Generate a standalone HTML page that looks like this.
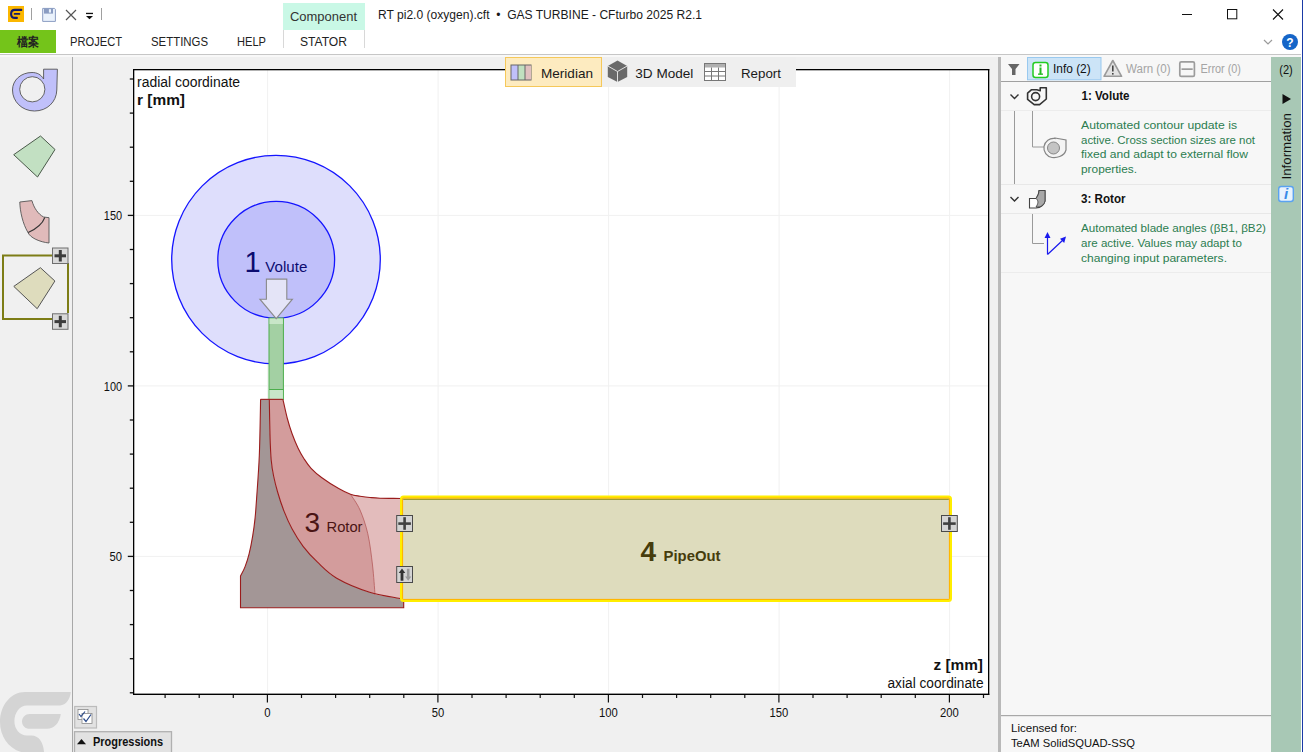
<!DOCTYPE html>
<html><head><meta charset="utf-8">
<style>
html,body{margin:0;padding:0;width:1303px;height:752px;overflow:hidden;background:#f0f0f0;}
svg{position:absolute;left:0;top:0;display:block;}
text{font-family:"Liberation Sans",sans-serif;}
</style></head>
<body>
<svg width="1303" height="752" viewBox="0 0 1303 752">
<!-- ===== title + menu area ===== -->
<rect x="0" y="0" width="1303" height="54" fill="#ffffff"/>
<rect x="0" y="54" width="1303" height="1" fill="#c6c6c6"/><rect x="0" y="55" width="1303" height="2" fill="#f8f8f8"/>
<!-- logo -->
<rect x="8" y="6" width="16" height="16" fill="#fbb700"/>
<path d="M21.3 9.9 L14.8 9.9 C12.3 9.9 11.1 11.8 11.1 14 C11.1 16.3 12.5 17.9 15 17.9 L16.9 17.9" fill="none" stroke="#14196a" stroke-width="2.1" stroke-linecap="round"/>
<path d="M14.6 13.9 L19.4 13.9" fill="none" stroke="#14196a" stroke-width="1.7" stroke-linecap="round"/>
<rect x="31" y="8" width="1" height="12" fill="#a0a0a0"/>
<!-- save icon -->
<path d="M42.7 8.4 L54.5 8.4 L55.4 9.3 L55.4 21.4 L42.7 21.4 Z" fill="#eaf2fc" stroke="#8a9cc2" stroke-width="1"/>
<rect x="44" y="8.4" width="9" height="5.2" fill="#8a9cc2"/>
<rect x="48.9" y="9.2" width="2.1" height="3.4" fill="#eaf2fc"/>
<!-- close x -->
<path d="M66 10 L76 20 M76 10 L66 20" stroke="#555" stroke-width="1.2"/>
<!-- dropdown -->
<rect x="86" y="12.8" width="7" height="1.3" fill="#111"/>
<path d="M86 16 L93 16 L89.5 19.3 Z" fill="#111"/>
<rect x="101" y="8" width="1" height="12" fill="#a0a0a0"/>
<!-- Component tab -->
<rect x="283" y="3" width="82" height="27" fill="#c9f8e6"/>
<text x="290" y="21" font-size="13" fill="#333" textLength="67" lengthAdjust="spacingAndGlyphs">Component</text>
<rect x="283" y="30" width="1" height="18" fill="#d8d8d8"/>
<rect x="364" y="30" width="1" height="18" fill="#d8d8d8"/>
<!-- title -->
<text x="378" y="19" font-size="12.3" fill="#1a1a1a" textLength="324" lengthAdjust="spacingAndGlyphs">RT pi2.0 (oxygen).cft&#160; • &#160;GAS TURBINE - CFturbo 2025 R2.1</text>
<!-- window controls -->
<rect x="1182" y="14" width="10" height="1" fill="#111"/>
<rect x="1227.5" y="9.5" width="9.3" height="9.3" fill="none" stroke="#111" stroke-width="1"/>
<path d="M1273 9.5 L1283 19.5 M1283 9.5 L1273 19.5" stroke="#111" stroke-width="1.1"/>
<!-- menu -->
<rect x="0" y="30" width="56" height="23" fill="#74c41a"/>
<text x="17" y="46" font-size="12" font-weight="bold" fill="#222" textLength="22" lengthAdjust="spacingAndGlyphs">檔案</text>
<text x="70" y="46" font-size="12.6" fill="#222" textLength="52" lengthAdjust="spacingAndGlyphs">PROJECT</text>
<text x="151" y="46" font-size="12.6" fill="#222" textLength="57" lengthAdjust="spacingAndGlyphs">SETTINGS</text>
<text x="237" y="46" font-size="12.6" fill="#222" textLength="29" lengthAdjust="spacingAndGlyphs">HELP</text>
<text x="300" y="46" font-size="12.6" fill="#222" textLength="47" lengthAdjust="spacingAndGlyphs">STATOR</text>
<!-- chevron + help -->
<path d="M1264 40 L1268 44 L1272 40" fill="none" stroke="#9a9a9a" stroke-width="1.2"/>
<circle cx="1290" cy="42" r="8" fill="#1565c8"/>
<text x="1290" y="47" font-size="12" font-weight="bold" fill="#fff" text-anchor="middle">?</text>


<!-- ===== plot ===== -->
<rect x="133" y="69" width="855" height="625" fill="#ffffff"/>
<rect x="267.1" y="70" width="1" height="623" fill="#f1f1f1"/>
<rect x="437.6" y="70" width="1" height="623" fill="#f1f1f1"/>
<rect x="608.1" y="70" width="1" height="623" fill="#f1f1f1"/>
<rect x="778.6" y="70" width="1" height="623" fill="#f1f1f1"/>
<rect x="949.1" y="70" width="1" height="623" fill="#f1f1f1"/>
<rect x="134" y="555.9" width="854" height="1" fill="#f1f1f1"/>
<rect x="134" y="385.4" width="854" height="1" fill="#f1f1f1"/>
<rect x="134" y="214.9" width="854" height="1" fill="#f1f1f1"/>
<rect x="129.8" y="692.15" width="3.2" height="1.3" fill="#111"/>
<rect x="129.8" y="658.05" width="3.2" height="1.3" fill="#111"/>
<rect x="129.8" y="623.95" width="3.2" height="1.3" fill="#111"/>
<rect x="129.8" y="589.85" width="3.2" height="1.3" fill="#111"/>
<rect x="127.8" y="555.75" width="5.2" height="1.3" fill="#111"/>
<rect x="129.8" y="521.65" width="3.2" height="1.3" fill="#111"/>
<rect x="129.8" y="487.55" width="3.2" height="1.3" fill="#111"/>
<rect x="129.8" y="453.45" width="3.2" height="1.3" fill="#111"/>
<rect x="129.8" y="419.35" width="3.2" height="1.3" fill="#111"/>
<rect x="127.8" y="385.25" width="5.2" height="1.3" fill="#111"/>
<rect x="129.8" y="351.15" width="3.2" height="1.3" fill="#111"/>
<rect x="129.8" y="317.05" width="3.2" height="1.3" fill="#111"/>
<rect x="129.8" y="282.95" width="3.2" height="1.3" fill="#111"/>
<rect x="129.8" y="248.85" width="3.2" height="1.3" fill="#111"/>
<rect x="127.8" y="214.75" width="5.2" height="1.3" fill="#111"/>
<rect x="129.8" y="180.65" width="3.2" height="1.3" fill="#111"/>
<rect x="129.8" y="146.55" width="3.2" height="1.3" fill="#111"/>
<rect x="129.8" y="112.45" width="3.2" height="1.3" fill="#111"/>
<rect x="129.8" y="78.35" width="3.2" height="1.3" fill="#111"/>
<rect x="164.5" y="694.5" width="1.2" height="3.5" fill="#111"/>
<rect x="198.6" y="694.5" width="1.2" height="3.5" fill="#111"/>
<rect x="232.7" y="694.5" width="1.2" height="3.5" fill="#111"/>
<rect x="266.8" y="694.5" width="1.2" height="8" fill="#111"/>
<rect x="300.9" y="694.5" width="1.2" height="3.5" fill="#111"/>
<rect x="335.0" y="694.5" width="1.2" height="3.5" fill="#111"/>
<rect x="369.1" y="694.5" width="1.2" height="3.5" fill="#111"/>
<rect x="403.2" y="694.5" width="1.2" height="3.5" fill="#111"/>
<rect x="437.3" y="694.5" width="1.2" height="8" fill="#111"/>
<rect x="471.4" y="694.5" width="1.2" height="3.5" fill="#111"/>
<rect x="505.5" y="694.5" width="1.2" height="3.5" fill="#111"/>
<rect x="539.6" y="694.5" width="1.2" height="3.5" fill="#111"/>
<rect x="573.7" y="694.5" width="1.2" height="3.5" fill="#111"/>
<rect x="607.8" y="694.5" width="1.2" height="8" fill="#111"/>
<rect x="641.9" y="694.5" width="1.2" height="3.5" fill="#111"/>
<rect x="676.0" y="694.5" width="1.2" height="3.5" fill="#111"/>
<rect x="710.1" y="694.5" width="1.2" height="3.5" fill="#111"/>
<rect x="744.2" y="694.5" width="1.2" height="3.5" fill="#111"/>
<rect x="778.3" y="694.5" width="1.2" height="8" fill="#111"/>
<rect x="812.4" y="694.5" width="1.2" height="3.5" fill="#111"/>
<rect x="846.5" y="694.5" width="1.2" height="3.5" fill="#111"/>
<rect x="880.6" y="694.5" width="1.2" height="3.5" fill="#111"/>
<rect x="914.7" y="694.5" width="1.2" height="3.5" fill="#111"/>
<rect x="948.8" y="694.5" width="1.2" height="8" fill="#111"/>
<rect x="982.9" y="694.5" width="1.2" height="3.5" fill="#111"/>
<!-- volute -->
<circle cx="276" cy="259.6" r="104.3" fill="#dedefc" stroke="#1414ff" stroke-width="1.3"/>
<circle cx="276.2" cy="259.8" r="58.4" fill="#c0c0fa" stroke="#1414ff" stroke-width="1.3"/>
<text x="244.5" y="272" font-size="29" fill="#0c0c70">1</text>
<text x="265.3" y="272" font-size="15" fill="#0c0c70" textLength="42" lengthAdjust="spacingAndGlyphs">Volute</text>
<!-- pipe -->
<rect x="269" y="318" width="14.4" height="81.5" fill="#a3d0a3" stroke="#4cae4c" stroke-width="1"/>
<rect x="269.5" y="318.5" width="13.4" height="5.5" fill="#c8e6c8"/>
<rect x="269.5" y="389" width="13.4" height="10" fill="#c8e6c8"/>
<rect x="269" y="389" width="14.4" height="1" fill="#4cae4c"/>

<!-- arrow -->
<path d="M266.4 279.1 L286.8 279.1 L286.8 299.2 L292.4 299.2 L276.2 318.6 L259.9 299.2 L266.4 299.2 Z" fill="#e8e8f6" fill-opacity="0.9" stroke="#8a8a8a" stroke-width="1.1"/>
<!-- rotor hub -->
<path d="M240.5 607.8 L403.7 607.8 L403.7 598.6 L401 598.6  C395.8 597.5 380.3 595.6 369.6 592.2 C358.9 588.8 345.4 583.2 336.7 578.2 C328.0 573.2 323.1 567.5 317.5 562.2 C311.9 556.9 307.4 551.9 303.1 546.3 C298.9 540.7 295.2 534.6 292.0 528.7 C288.8 522.8 286.4 517.2 284.0 511.1 C281.6 505.0 279.3 497.9 277.6 492.0 C275.9 486.1 274.7 481.3 273.6 476.0 C272.5 470.7 271.8 466.9 271.2 460.0 C270.6 453.1 270.3 445.0 270.0 434.9 C269.7 424.8 269.4 405.2 269.3 399.3 L260.6 399.3  C260.4 408.7 260.0 439.0 259.3 455.8 C258.6 472.6 257.2 489.6 256.5 500.0 C255.8 510.4 255.7 511.9 255.1 517.9 C254.5 523.9 253.7 529.8 252.7 535.8 C251.7 541.8 250.4 548.6 249.1 553.8 C247.8 559.0 246.4 563.2 245.0 566.9 C243.6 570.6 241.2 574.4 240.5 575.9 Z" fill="#a39696"/>
<path d="M282.9 399.3 C283.6 402.4 285.7 412.3 287.2 418.0 C288.7 423.7 290.2 428.5 292.0 433.5 C293.8 438.5 296.0 443.7 298.0 447.9 C300.0 452.1 301.8 455.3 304.0 458.7 C306.2 462.1 308.1 465.1 311.1 468.3 C314.1 471.5 317.3 474.4 321.9 477.8 C326.5 481.2 333.9 485.9 338.7 488.6 C343.5 491.4 346.9 493.0 350.5 494.3 C354.1 495.6 356.8 495.7 360.0 496.2 C363.2 496.7 366.7 497.2 370.0 497.5 C373.3 497.8 374.8 498.0 380.0 498.2 C385.2 498.4 397.5 498.4 401.0 498.5 L401 598.6  C395.8 597.5 380.3 595.6 369.6 592.2 C358.9 588.8 345.4 583.2 336.7 578.2 C328.0 573.2 323.1 567.5 317.5 562.2 C311.9 556.9 307.4 551.9 303.1 546.3 C298.9 540.7 295.2 534.6 292.0 528.7 C288.8 522.8 286.4 517.2 284.0 511.1 C281.6 505.0 279.3 497.9 277.6 492.0 C275.9 486.1 274.7 481.3 273.6 476.0 C272.5 470.7 271.8 466.9 271.2 460.0 C270.6 453.1 270.3 445.0 270.0 434.9 C269.7 424.8 269.4 405.2 269.3 399.3 Z" fill="#d39c9c"/>
<path d="M350.5 494.3 C352.1 494.6 356.8 495.7 360.0 496.2 C363.2 496.7 366.7 497.2 370.0 497.5 C373.3 497.8 374.8 498.0 380.0 498.2 C385.2 498.4 397.5 498.4 401.0 498.5 L401 598.6 C 392 597.5 382 596 375 594.5  C374.6 589.6 373.7 575.1 372.5 565.0 C371.3 554.9 369.9 543.0 367.8 533.8 C365.7 524.6 362.9 516.6 360.0 510.0 C357.1 503.4 352.1 496.9 350.5 494.3 Z" fill="#e3bcbc"/>
<path d="M350.5 494.3 C352.1 496.9 357.1 503.4 360.0 510.0 C362.9 516.6 365.7 524.6 367.8 533.8 C369.9 543.0 371.3 554.9 372.5 565.0 C373.7 575.1 374.6 589.6 375.0 594.5" fill="none" stroke="#b45a5a" stroke-width="0.8"/>
<path d="M282.9 399.3 C283.6 402.4 285.7 412.3 287.2 418.0 C288.7 423.7 290.2 428.5 292.0 433.5 C293.8 438.5 296.0 443.7 298.0 447.9 C300.0 452.1 301.8 455.3 304.0 458.7 C306.2 462.1 308.1 465.1 311.1 468.3 C314.1 471.5 317.3 474.4 321.9 477.8 C326.5 481.2 333.9 485.9 338.7 488.6 C343.5 491.4 346.9 493.0 350.5 494.3 C354.1 495.6 356.8 495.7 360.0 496.2 C363.2 496.7 366.7 497.2 370.0 497.5 C373.3 497.8 374.8 498.0 380.0 498.2 C385.2 498.4 397.5 498.4 401.0 498.5" fill="none" stroke="#9a1c1c" stroke-width="1.1"/>
<path d="M269.3 399.3 C269.4 405.2 269.7 424.8 270.0 434.9 C270.3 445.0 270.6 453.1 271.2 460.0 C271.8 466.9 272.5 470.7 273.6 476.0 C274.7 481.3 275.9 486.1 277.6 492.0 C279.3 497.9 281.6 505.0 284.0 511.1 C286.4 517.2 288.8 522.8 292.0 528.7 C295.2 534.6 298.9 540.7 303.1 546.3 C307.4 551.9 311.9 556.9 317.5 562.2 C323.1 567.5 328.0 573.2 336.7 578.2 C345.4 583.2 358.9 588.8 369.6 592.2 C380.3 595.6 395.8 597.5 401.0 598.6" fill="none" stroke="#9a1c1c" stroke-width="1.1"/>
<path d="M403.7 598.6 L403.7 607.8 L240.5 607.8 L240.5 575.9  C241.2 574.4 243.6 570.6 245.0 566.9 C246.4 563.2 247.8 559.0 249.1 553.8 C250.4 548.6 251.7 541.8 252.7 535.8 C253.7 529.8 254.5 523.9 255.1 517.9 C255.7 511.9 255.8 510.4 256.5 500.0 C257.2 489.6 258.6 472.6 259.3 455.8 C260.0 439.0 260.4 408.7 260.6 399.3" fill="none" stroke="#9a1c1c" stroke-width="1.1"/>
<rect x="260.5" y="398.8" width="22.4" height="1.1" fill="#9a1c1c"/>
<text x="304.5" y="532" font-size="28" fill="#4a1414">3</text>
<text x="326.5" y="532" font-size="15" fill="#4a1414" textLength="36" lengthAdjust="spacingAndGlyphs">Rotor</text>
<!-- pipeout -->
<rect x="401.5" y="497" width="549" height="103.5" rx="2" fill="#dedcbd" stroke="#ffee00" stroke-width="3"/>
<rect x="402.6" y="498.1" width="546.8" height="101.3" rx="0.8" fill="none" stroke="#ffa800" stroke-width="0.9"/>
<rect x="403.2" y="498.9" width="545.6" height="0.9" fill="#8c8c10"/>
<text x="640.6" y="560.7" font-size="28" font-weight="bold" fill="#463c0c">4</text>
<text x="663.5" y="560.7" font-size="15" font-weight="bold" fill="#463c0c" textLength="57" lengthAdjust="spacingAndGlyphs">PipeOut</text>
<!-- plot buttons -->
<rect x="396.7" y="515.5" width="15.8" height="16" fill="#d4d4d4" stroke="#4a4a4a" stroke-width="1"/>
<rect x="398.3" y="522.3" width="12.6" height="2.6" fill="#404040"/>
<rect x="403.3" y="517.2" width="2.6" height="12.6" fill="#404040"/>
<rect x="941.5" y="515.5" width="15.8" height="16" fill="#d4d4d4" stroke="#4a4a4a" stroke-width="1"/>
<rect x="943.1" y="522.3" width="12.6" height="2.6" fill="#404040"/>
<rect x="948.1" y="517.2" width="2.6" height="12.6" fill="#404040"/>
<rect x="396.7" y="566.5" width="15.8" height="16" fill="#d4d4d4" stroke="#4a4a4a" stroke-width="1"/>
<path d="M402 568.5 L405.3 573 L403.4 573 L403.4 580.8 L400.6 580.8 L400.6 573 L398.7 573 Z" fill="#333"/>
<path d="M408.2 580.8 L411.3 576.5 L409.5 576.5 L409.5 568.8 L406.9 568.8 L406.9 576.5 L405.1 576.5 Z" fill="#9a9a9a"/>
<!-- axes frame -->
<rect x="133" y="69" width="856.3" height="1.3" fill="#000"/><rect x="133" y="69" width="1.3" height="626" fill="#000"/><rect x="988" y="69" width="1.3" height="626" fill="#000"/><rect x="133" y="693.6" width="856.3" height="1.4" fill="#000"/>
<!-- labels -->
<text x="137" y="87" font-size="14" fill="#111" textLength="103" lengthAdjust="spacingAndGlyphs">radial coordinate</text>
<text x="137" y="104.7" font-size="15" font-weight="bold" fill="#111" textLength="48" lengthAdjust="spacingAndGlyphs">r [mm]</text>
<text x="983" y="670" font-size="15" font-weight="bold" fill="#111" text-anchor="end" textLength="49.5" lengthAdjust="spacingAndGlyphs">z [mm]</text>
<text x="983.5" y="688" font-size="14" fill="#111" text-anchor="end" textLength="96" lengthAdjust="spacingAndGlyphs">axial coordinate</text>
<g font-size="12.5" fill="#111">
<text x="122.1" y="220" text-anchor="end" textLength="18.3" lengthAdjust="spacingAndGlyphs">150</text>
<text x="122.1" y="391" text-anchor="end" textLength="18.3" lengthAdjust="spacingAndGlyphs">100</text>
<text x="122.1" y="561" text-anchor="end" textLength="12.5" lengthAdjust="spacingAndGlyphs">50</text>
<text x="267.4" y="717" text-anchor="middle" textLength="6.3" lengthAdjust="spacingAndGlyphs">0</text>
<text x="437.9" y="717" text-anchor="middle" textLength="12.5" lengthAdjust="spacingAndGlyphs">50</text>
<text x="608.4" y="717" text-anchor="middle" textLength="18.8" lengthAdjust="spacingAndGlyphs">100</text>
<text x="778.9" y="717" text-anchor="middle" textLength="18.8" lengthAdjust="spacingAndGlyphs">150</text>
<text x="949.4" y="717" text-anchor="middle" textLength="18.8" lengthAdjust="spacingAndGlyphs">200</text>
</g>
<!-- view toolbar -->
<rect x="505" y="57" width="291" height="30" fill="#efefef"/>
<rect x="505.5" y="57.5" width="96" height="29" fill="#fdebc0" stroke="#f5c85a" stroke-width="1"/>
<rect x="510.5" y="64.5" width="21" height="16" fill="#666"/>
<rect x="511.5" y="65.5" width="6" height="14" fill="#c0c0fa"/>
<rect x="518.5" y="65.5" width="6" height="14" fill="#c0e0c0"/>
<rect x="525.5" y="65.5" width="5.5" height="14" fill="#e0c0c0"/>
<text x="541" y="78" font-size="13.5" fill="#1a1a1a" textLength="52" lengthAdjust="spacingAndGlyphs">Meridian</text>
<path d="M617.5 60.5 L627.2 66 L627.2 77 L617.5 82 L607.8 77 L607.8 66 Z" fill="#6a6a6a"/>
<path d="M607.8 66 L617.5 71.5 L627.2 66 M617.5 71.5 L617.5 82" fill="none" stroke="#efefef" stroke-width="0.9"/>
<text x="635.3" y="78" font-size="13.5" fill="#1a1a1a" textLength="58" lengthAdjust="spacingAndGlyphs">3D Model</text>
<rect x="704.5" y="63.5" width="21" height="17" fill="#fff" stroke="#777" stroke-width="1"/>
<rect x="705" y="64" width="20" height="3.5" fill="#b0b0b0"/>
<path d="M705 71.5 H725 M705 76 H725 M711.5 67.5 V80 M718.5 67.5 V80" stroke="#777" stroke-width="1"/>
<text x="741" y="78" font-size="13.5" fill="#1a1a1a" textLength="40" lengthAdjust="spacingAndGlyphs">Report</text>

<!-- ===== left panel ===== -->
<rect x="72" y="57" width="1" height="695" fill="#a8a8a8"/>
<!-- volute icon -->
<path d="M43.6 69.2 L57.4 69.2 L56.8 90 C56.5 102 47 111 34.5 111 C22 111 12.5 101.5 12.5 90 C12.5 80 21 72.5 32 72.5 C37 72.5 41 74.5 43.6 79 Z" fill="#c0c0fa" stroke="#555" stroke-width="0.9"/>
<circle cx="32.3" cy="89.3" r="12.6" fill="#f0f0f0" stroke="#555" stroke-width="0.9"/>
<!-- green diamond -->
<path d="M13.7 154.7 L40.5 136 L55 149.5 L37.5 177 Z" fill="#c2e0c2" stroke="#4a5a4a" stroke-width="1"/>
<!-- pink rotor icon -->
<path d="M19.8 202 L31.9 200.6 C34 208 38 214 43.6 217 L49 217.7 L49 243 C40 242 30 238 27.7 232 C23 224 20 212 19.8 202 Z" fill="#e0baba" stroke="#555" stroke-width="0.9"/>
<path d="M28.2 232.5 C35 229.5 42 225 44.8 217.5" fill="none" stroke="#333" stroke-width="1.1"/>
<!-- selected box -->
<path d="M52 255.5 L3 255.5 L3 319 L52 319 M68 263 L68 313" fill="none" stroke="#7d7d16" stroke-width="2"/>
<path d="M13.8 286.4 L40.4 267.7 L54.9 281 L37.2 308.7 Z" fill="#dedcbd" stroke="#555" stroke-width="1"/>
<rect x="52.5" y="248" width="15.5" height="15.5" fill="#d9d9d9" stroke="#6e6e6e" stroke-width="1"/>
<rect x="54.5" y="254.3" width="11.5" height="3" fill="#3c3c3c"/>
<rect x="58.8" y="250" width="3" height="11.5" fill="#3c3c3c"/>
<rect x="52.5" y="313.8" width="15.5" height="15.5" fill="#d9d9d9" stroke="#6e6e6e" stroke-width="1"/>
<rect x="54.5" y="320.1" width="11.5" height="3" fill="#3c3c3c"/>
<rect x="58.8" y="315.8" width="3" height="11.5" fill="#3c3c3c"/>
<!-- watermark logo -->
<path d="M25 692 L70.8 692 C70.2 699 66 705.4 60 705.4 L27 705.4 C19.5 705.4 14.4 713 14.4 721 C14.4 729 19.5 735.5 27 735.5 L31.5 735.5 C38.5 735.5 43.5 742 44 752 L21 752 C8 748 0 736 0 722 C0 705 11 692 25 692 Z" fill="#d4d4d4"/>
<path d="M29.5 714 L60.8 714 C59.5 723 54 728.8 47 728.8 L29.5 728.8 C25.4 728.8 22 725.5 22 721.4 C22 717.3 25.4 714 29.5 714 Z" fill="#d4d4d4"/>
<!-- bottom buttons -->
<rect x="74.7" y="706.5" width="21.8" height="21.5" fill="#e2e2e2" stroke="#bcbcbc" stroke-width="1.2"/>
<rect x="78" y="709.5" width="10" height="10" fill="#fff" stroke="#8a8a8a" stroke-width="0.8"/>
<rect x="82" y="713.5" width="10" height="10" fill="#fff" stroke="#8a8a8a" stroke-width="0.8"/>
<path d="M79 714 L81 716.5 L85 711.5 M83.5 718.5 L86 721.5 L91 714.5" fill="none" stroke="#2a4a8a" stroke-width="1.2"/>
<rect x="74.5" y="731.7" width="97" height="21" fill="#e2e2e2" stroke="#b0b0b0" stroke-width="1.3"/>
<path d="M77 744.2 L86 744.2 L81.5 739 Z" fill="#111"/>
<text x="93" y="746" font-size="12" font-weight="bold" fill="#111" textLength="70" lengthAdjust="spacingAndGlyphs">Progressions</text>


<!-- ===== right panel ===== -->
<rect x="998" y="57" width="3" height="695" fill="#b9b9b9"/>
<rect x="1001" y="57" width="270" height="695" fill="#f7f7f7"/>
<rect x="1271" y="57" width="30" height="695" fill="#a8c8b5"/>

<!-- info toolbar -->
<path d="M1008 64 L1019.5 64 L1015.5 69 L1015.5 75 L1012 75 L1012 69 Z" fill="#666"/>
<rect x="1027.5" y="57.5" width="73.5" height="22.3" fill="#cce4f7" stroke="#99c9ef" stroke-width="1"/>
<rect x="1033" y="62.5" width="15" height="15" rx="2.5" fill="#fff" stroke="#22cc22" stroke-width="1.5"/>
<rect x="1039.5" y="64.5" width="2" height="2" fill="#22bb22"/>
<rect x="1039.5" y="67.5" width="2" height="7" fill="#22bb22"/>
<rect x="1038" y="73.5" width="5" height="1.3" fill="#22bb22"/>
<text x="1053" y="73" font-size="12" fill="#111" textLength="37.7" lengthAdjust="spacingAndGlyphs">Info (2)</text>
<path d="M1112.8 60.5 L1121.6 76.3 L1104 76.3 Z" fill="#e2e2e2" stroke="#9a9a9a" stroke-width="1.6" stroke-linejoin="round"/>
<rect x="1112" y="65.5" width="1.6" height="6" fill="#444"/>
<rect x="1112" y="73" width="1.6" height="1.6" fill="#444"/>
<text x="1126" y="73" font-size="12" fill="#a4a4a4" textLength="44.5" lengthAdjust="spacingAndGlyphs">Warn (0)</text>
<rect x="1179.8" y="61.8" width="14.6" height="14.6" rx="1.5" fill="none" stroke="#9c9c9c" stroke-width="1.7"/>
<rect x="1181.5" y="68.3" width="11.2" height="1.7" fill="#9c9c9c"/>
<text x="1200.5" y="73" font-size="12" fill="#a4a4a4" textLength="40.5" lengthAdjust="spacingAndGlyphs">Error (0)</text>
<rect x="1001" y="81" width="270" height="1" fill="#a0a0a0"/>
<!-- tree rows -->
<rect x="1001" y="110" width="270" height="1" fill="#ececec"/>
<rect x="1001" y="184" width="270" height="1" fill="#e8e8e8"/>
<rect x="1001" y="213" width="270" height="1" fill="#e8e8e8"/>
<rect x="1001" y="272" width="270" height="1" fill="#ececec"/>
<path d="M1010.5 94.5 L1014.5 98.5 L1018.5 94.5" fill="none" stroke="#333" stroke-width="1.4"/>
<path d="M1010.5 197 L1014.5 201 L1018.5 197" fill="none" stroke="#333" stroke-width="1.4"/>
<!-- volute small icon -->
<path d="M1040.2 87.7 L1046.3 87.7 L1046.3 99 L1039.6 104.6 L1034.2 104.6 L1027.6 99.4 L1027.6 93.2 L1031.3 89.8 L1036.8 89.8 L1040.2 90.8 Z" fill="none" stroke="#333" stroke-width="1.6" stroke-linejoin="round"/>
<circle cx="1035.6" cy="96.6" r="4" fill="none" stroke="#333" stroke-width="1.6"/>
<text x="1081.5" y="100" font-size="12" font-weight="bold" fill="#111" textLength="48" lengthAdjust="spacingAndGlyphs">1: Volute</text>
<path d="M1014.5 111 L1014.5 184 M1032.5 111 L1032.5 147 L1044 147" fill="none" stroke="#9a9a9a" stroke-width="1"/>
<!-- gray volute icon in tree -->
<path d="M1055 138 L1066 140 L1066 150 C1064 157 1056 158 1052 157.5 A9 9 0 1 1 1055 138.5 Z" fill="#f4f4f4" stroke="#858585" stroke-width="1.2"/>
<circle cx="1053.5" cy="148" r="6" fill="#c4c4c4" stroke="#858585" stroke-width="1"/>
<g font-size="11.6" fill="#2c7d50">
<text x="1081" y="128.8" textLength="156" lengthAdjust="spacingAndGlyphs">Automated contour update is</text>
<text x="1081" y="143.6" textLength="174" lengthAdjust="spacingAndGlyphs">active. Cross section sizes are not</text>
<text x="1081" y="158.4" textLength="167" lengthAdjust="spacingAndGlyphs">fixed and adapt to external flow</text>
<text x="1081" y="173.2" textLength="56" lengthAdjust="spacingAndGlyphs">properties.</text>
</g>
<!-- rotor small icon -->
<path d="M1029.5 198.5 L1036 198.5 C1038 196 1039 193 1039 190.5 L1045 190.5 L1045 201 C1044 205 1041 207.5 1036 208 L1029.5 208 Z" fill="#fff" stroke="#444" stroke-width="1.1"/>
<path d="M1039 190.5 L1045 190.5 L1045 201 C1044 205 1041 207.5 1036 207 C1038 204 1039 201 1036 198.5 C1038 196 1039 193 1039 190.5 Z" fill="#a8a8a8" stroke="#444" stroke-width="0.9"/>
<text x="1081" y="203" font-size="12" font-weight="bold" fill="#111" textLength="44.5" lengthAdjust="spacingAndGlyphs">3: Rotor</text>
<path d="M1032.5 214 L1032.5 243.5 L1044 243.5" fill="none" stroke="#9a9a9a" stroke-width="1"/>
<path d="M1047.5 254.5 L1047.5 236 M1047.5 254.5 L1063 240" fill="none" stroke="#1a1aee" stroke-width="1.2"/>
<path d="M1047.5 232 L1050.5 238 L1044.5 238 Z M1066 236.5 L1064.2 243 L1060 238.8 Z" fill="#1a1aee"/>
<g font-size="11.6" fill="#2c7d50">
<text x="1081" y="232.2" textLength="185" lengthAdjust="spacingAndGlyphs">Automated blade angles (βB1, βB2)</text>
<text x="1081" y="246.9" textLength="161" lengthAdjust="spacingAndGlyphs">are active. Values may adapt to</text>
<text x="1081" y="261.7" textLength="146" lengthAdjust="spacingAndGlyphs">changing input parameters.</text>
</g>
<!-- licensed -->
<rect x="1001" y="715" width="270" height="1.2" fill="#a8a8a8"/>
<text x="1011" y="732" font-size="11.5" fill="#111" textLength="66" lengthAdjust="spacingAndGlyphs">Licensed for:</text>
<text x="1011" y="747" font-size="11.5" fill="#111" textLength="124" lengthAdjust="spacingAndGlyphs">TeAM SolidSQUAD-SSQ</text>
<!-- green sidebar -->
<text x="1286" y="73.5" font-size="12" fill="#111" text-anchor="middle" textLength="13.5" lengthAdjust="spacingAndGlyphs">(2)</text>
<path d="M1282.5 94 L1291 99 L1282.5 104 Z" fill="#111"/>
<text transform="translate(1290.5 179.5) rotate(-90)" font-size="12" fill="#111" textLength="66.5" lengthAdjust="spacingAndGlyphs">Information</text>
<rect x="1278.7" y="186.5" width="14.6" height="15" rx="2.5" fill="#eaf3fe" stroke="#5aa2f0" stroke-width="1.4"/>
<text x="1286" y="199" font-size="15" font-style="italic" font-weight="bold" fill="#3a8ae8" text-anchor="middle" font-family="Liberation Serif">i</text>

<rect x="1301" y="0" width="1" height="752" fill="#ffffff"/><rect x="1302" y="0" width="1" height="752" fill="#1a3aa6"/>
</svg>
</body></html>
